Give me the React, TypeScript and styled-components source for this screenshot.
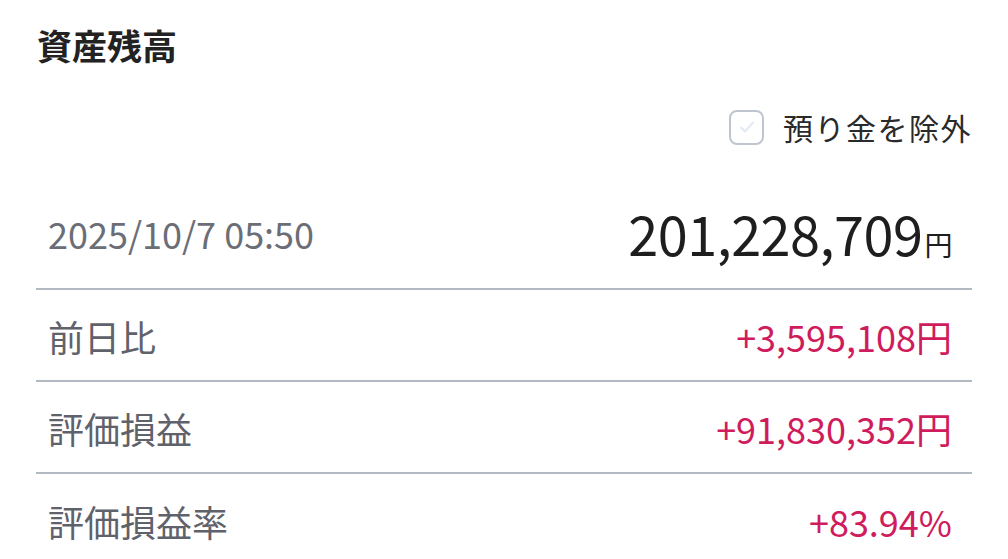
import styled, { createGlobalStyle } from "styled-components";

const GlobalStyle = createGlobalStyle`
  html, body {
    margin: 0;
    padding: 0;
    background: #ffffff;
  }
  body {
    font-family: "Noto Sans CJK JP", "Noto Sans", sans-serif;
    -webkit-font-smoothing: antialiased;
  }
`;

const rows = [
  { label: "前日比", value: "+3,595,108", unit: "円" },
  { label: "評価損益", value: "+91,830,352", unit: "円" },
  { label: "評価損益率", value: "+83.94%", unit: "" },
];

const App = () => {
  return (
    <>
      <GlobalStyle />
      <Page>
        <Title>資産残高</Title>
        <FilterBar>
          <CheckLabel>
            <CheckBox>
              <svg width="20" height="20" viewBox="0 0 20 20" fill="none">
                <path
                  d="M4 10.5l4 4 8-9"
                  stroke="#e2eaf4"
                  strokeWidth="2"
                  strokeLinecap="round"
                  strokeLinejoin="round"
                />
              </svg>
            </CheckBox>
            <CheckText>預り金を除外</CheckText>
          </CheckLabel>
        </FilterBar>
        <TotalRow>
          <DateText>2025/10/7 05:50</DateText>
          <Total>
            201,228,709<TotalUnit>円</TotalUnit>
          </Total>
        </TotalRow>
        {rows.map((row) => (
          <StatRow key={row.label}>
            <StatLabel>{row.label}</StatLabel>
            <StatValue>
              {row.value}
              {row.unit}
            </StatValue>
          </StatRow>
        ))}
      </Page>
    </>
  );
};

export default App;

const Page = styled("div")`
  padding: 0 36px;
  height: 559px;
  overflow: hidden;
`;

const Title = styled("h1")`
  margin: 0;
  padding: 21px 0 0 1px;
  font-size: 35px;
  line-height: 48px;
  font-weight: 700;
  color: #222;
`;

const FilterBar = styled("div")`
  display: flex;
  justify-content: flex-end;
  margin-top: 38px;
`;

const CheckLabel = styled("label")`
  display: flex;
  align-items: center;
  gap: 19px;
`;

const CheckBox = styled("span")`
  box-sizing: border-box;
  width: 35px;
  height: 35px;
  margin-left: -2px;
  border: 2px solid #bfc5cf;
  border-radius: 8px;
  display: flex;
  align-items: center;
  justify-content: center;
  background: #fff;
`;

const CheckText = styled("span")`
  font-size: 30px;
  line-height: 40px;
  color: #2a2a2a;
  letter-spacing: 1.5px;
`;

const TotalRow = styled("div")`
  box-sizing: border-box;
  display: flex;
  align-items: center;
  justify-content: space-between;
  height: 143px;
  padding: 30px 20px 0 12px;
  border-bottom: 2px solid #b3b9c2;
`;

const DateText = styled("span")`
  font-size: 36px;
  color: #6b6e76;
`;

const Total = styled("span")`
  font-size: 54px;
  color: #1e1e1e;
  letter-spacing: -0.5px;
  display: flex;
  align-items: baseline;
`;

const TotalUnit = styled("span")`
  font-size: 28px;
  margin-left: 2px;
`;

const StatRow = styled("div")`
  box-sizing: border-box;
  display: flex;
  align-items: center;
  justify-content: space-between;
  height: 92px;
  padding: 2px 20px 0 12px;
  border-bottom: 2px solid #b3b9c2;
  &:last-child {
    border-bottom: none;
  }
`;

const StatLabel = styled("span")`
  font-size: 36px;
  color: #5f626a;
`;

const StatValue = styled("span")`
  font-size: 36px;
  color: #cf1c5c;
`;
